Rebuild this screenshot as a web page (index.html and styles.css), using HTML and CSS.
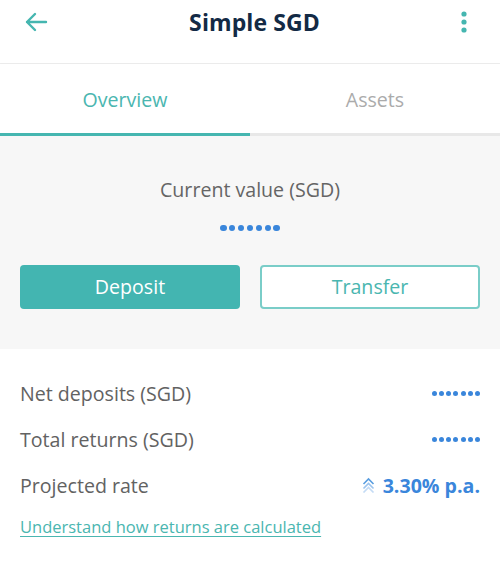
FILE: index.html
```html
<!DOCTYPE html>
<html>
<head>
<meta charset="utf-8">
<link rel="stylesheet" href="styles.css">
</head>
<body>
<div class="app">
  <header class="topbar">
    <svg class="back" width="24" height="20" viewBox="0 0 24 20"><path d="M22 10H3M11 2L3 10l8 8" fill="none" stroke="#45b6b0" stroke-width="2.4" stroke-linecap="round" stroke-linejoin="round"/></svg>
    <h1 class="title">Simple SGD</h1>
    <svg class="kebab" width="6" height="22" viewBox="0 0 6 22"><circle cx="3" cy="3" r="2.6" fill="#45b6b0"/><circle cx="3" cy="11" r="2.6" fill="#45b6b0"/><circle cx="3" cy="19" r="2.6" fill="#45b6b0"/></svg>
  </header>
  <nav class="tabs">
    <div class="tab active">Overview</div>
    <div class="tab">Assets</div>
  </nav>
  <section class="summary">
    <div class="cv-label">Current value (SGD)</div>
    <div class="dots big"><i></i><i></i><i></i><i></i><i></i><i></i><i></i></div>
    <div class="actions">
      <button class="btn primary">Deposit</button>
      <button class="btn outline">Transfer</button>
    </div>
  </section>
  <section class="details">
    <div class="row"><span class="label">Net deposits (SGD)</span><span class="dots small"><i></i><i></i><i></i><i></i><i></i><i></i><i></i></span></div>
    <div class="row"><span class="label">Total returns (SGD)</span><span class="dots small"><i></i><i></i><i></i><i></i><i></i><i></i><i></i></span></div>
    <div class="row"><span class="label">Projected rate</span><span class="rate"><svg width="13" height="16" viewBox="0 0 13 16"><path d="M1.5 7L6.5 2l5 5" fill="none" stroke="#5a9ee0" stroke-width="1.6"/><path d="M1.5 11.5l5-5 5 5" fill="none" stroke="#9cc4ee" stroke-width="1.6"/><path d="M1.5 15.5l5-5 5 5" fill="none" stroke="#c4dbf5" stroke-width="1.6"/></svg>3.30% p.a.</span></div>
    <a class="link" href="#">Understand how returns are calculated</a>
  </section>
</div>
</body>
</html>
```

FILE: styles.css
```css
* { box-sizing: border-box; }
html, body { margin: 0; padding: 0; background: #fff; }
body { font-family: "Open Sans", "Noto Sans", sans-serif; width: 500px; height: 568px; overflow: hidden; }
.app { display: flex; flex-direction: column; }
.topbar {
  height: 64px;
  display: flex;
  align-items: center;
  justify-content: space-between;
  padding: 0 33px 20px 24px;
  border-bottom: 1px solid #ececec;
}
.back { display: block; }
.title {
  margin: 0;
  font-size: 23px;
  font-weight: 700;
  color: #132a45;
  letter-spacing: 0.1px;
}
.kebab { display: block; }
.tabs {
  display: flex;
  height: 72px;
  border-bottom: 3px solid #e8e8e8;
  box-shadow: 0 1px 2px rgba(0,0,0,0.06);
}
.tab {
  flex: 1;
  display: flex;
  align-items: center;
  justify-content: center;
  font-size: 19.6px;
  color: #ababab;
  margin-bottom: -3px;
  padding-top: 2px;
  border-bottom: 3px solid transparent;
}
.tab.active { color: #4ab6b0; border-bottom-color: #45b6b0; }
.summary {
  background: #f7f7f7;
  height: 213px;
  display: flex;
  flex-direction: column;
  align-items: center;
  padding-top: 40px;
}
.cv-label { font-size: 19.6px; color: #656565; line-height: 27px; }
.dots { display: inline-flex; align-items: center; }
.dots i { display: block; border-radius: 50%; background: #3a86db; }
.dots.big { margin-top: 22px; gap: 2.5px; }
.dots.big i { width: 6.4px; height: 6.4px; }
.actions {
  display: grid;
  grid-template-columns: 1fr 1fr;
  gap: 20px;
  width: 100%;
  padding: 0 20px;
  margin-top: 34px;
}
.btn {
  height: 44px;
  border-radius: 4px;
  font-family: inherit;
  font-size: 19.6px;
  padding: 0 0 2px;
  cursor: pointer;
}
.btn.primary { background: #43b5b1; border: none; color: #fff; }
.btn.outline { background: #fff; border: 2px solid #7acdc8; color: #4ab6b0; }
.details { padding: 21px 20px 0 20px; display: flex; flex-direction: column; }
.row {
  display: flex;
  justify-content: space-between;
  align-items: center;
  height: 46px;
}
.label { font-size: 19.6px; color: #626262; }
.dots.small { gap: 2.2px; }
.dots.small i { width: 5px; height: 5px; }
.rate { display: inline-flex; align-items: center; gap: 8px; font-size: 19.6px; font-weight: 700; color: #3a86db; }
.rate svg { display: block; }
.link {
  margin-top: 8px;
  font-size: 16.5px;
  line-height: 22px;
  color: #4ab6b0;
  text-decoration: underline;
  text-underline-offset: 3px;
  align-self: flex-start;
}
```
